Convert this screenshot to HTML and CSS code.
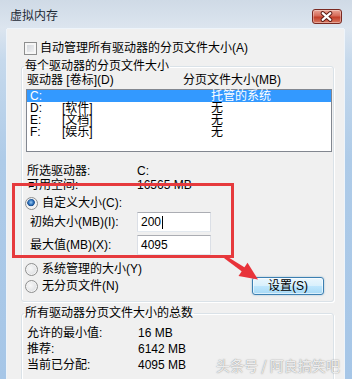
FILE: index.html
```html
<!DOCTYPE html>
<html lang="zh-CN">
<head>
    <meta charset="UTF-8">
    <title>虚拟内存</title>
    <link rel="stylesheet" href="styles.css">
</head>
<body>
    <div class="window">
        <div class="titlebar">
            <span class="title">虚拟内存</span>
            <span class="close">
                <svg width="30" height="15" viewBox="0 0 30 15">
                    <path d="M11 4 L19 11 M19 4 L11 11" stroke="#5a1a14" stroke-width="4.2" stroke-linecap="round"/>
                    <path d="M11 4 L19 11 M19 4 L11 11" stroke="#fff" stroke-width="2.2" stroke-linecap="round"/>
                </svg>
            </span>
        </div>

        <div class="client">
            <label class="check-row"><span class="checkbox"></span>自动管理所有驱动器的分页文件大小(A)</label>

            <fieldset class="group group-drives">
                <legend>每个驱动器的分页文件大小</legend>
                <div class="list-head">
                    <span class="col-drive">驱动器 [卷标](D)</span>
                    <span>分页文件大小(MB)</span>
                </div>
                <div class="listbox">
                    <div class="list-row selected"><span class="col-name"><span class="letter">C:</span></span><span>托管的系统</span></div>
                    <div class="list-row"><span class="col-name"><span class="letter">D:</span>[软件]</span><span>无</span></div>
                    <div class="list-row"><span class="col-name"><span class="letter">E:</span>[文档]</span><span>无</span></div>
                    <div class="list-row"><span class="col-name"><span class="letter">F:</span>[娱乐]</span><span>无</span></div>
                </div>

                <div class="info-row info-first"><span class="info-label">所选驱动器:</span><span>C:</span></div>
                <div class="info-row"><span class="info-label">可用空间:</span><span>16565 MB</span></div>

                <label class="radio-row custom-row"><span class="radio checked"></span>自定义大小(C):</label>
                <div class="size-row size-first">
                    <span class="size-label">初始大小(MB)(I):</span>
                    <span class="textbox">200<span class="caret"></span></span>
                </div>
                <div class="size-row">
                    <span class="size-label">最大值(MB)(X):</span>
                    <span class="textbox">4095</span>
                </div>

                <label class="radio-row system-row"><span class="radio"></span>系统管理的大小(Y)</label>
                <div class="last-row">
                    <label class="radio-row"><span class="radio"></span>无分页文件(N)</label>
                    <button class="set-btn">设置(S)</button>
                </div>
            </fieldset>

            <fieldset class="group group-total">
                <legend>所有驱动器分页文件大小的总数</legend>
                <div class="total-row total-first"><span class="total-label">允许的最小值:</span><span>16 MB</span></div>
                <div class="total-row"><span class="total-label">推荐:</span><span>6142 MB</span></div>
                <div class="total-row"><span class="total-label">当前已分配:</span><span>4095 MB</span></div>
            </fieldset>
        </div>

        <div class="highlight-box"></div>
        <svg class="arrow" width="50" height="40" viewBox="215 250 50 40">
            <polygon points="224.2,258.2 225.8,255.8 246.4,268.5 243.6,272.7" fill="#e8333a"/>
            <polygon points="258,279.5 238.5,275.9 247.5,262.7" fill="#e8333a"/>
        </svg>
        <div class="watermark">头条号 / 阿良搞笑吧</div>
    </div>
</body>
</html>
```

FILE: styles.css
```css
* {
    box-sizing: border-box;
}
body {
    margin: 0;
    width: 352px;
    height: 379px;
    overflow: hidden;
    font-family: "Liberation Sans", "Noto Sans CJK SC", sans-serif;
    font-size: 12px;
    line-height: 13px;
    color: #000;
}
.window {
    position: relative;
    height: 379px;
    background: linear-gradient(180deg, #cfdae6 0px, #dce5ef 28px, #c6d9ec 60px, #aecbe8 160px, #a6c6e7 379px);
}
.titlebar {
    height: 29px;
    display: flex;
    justify-content: space-between;
    align-items: flex-start;
    padding: 0 10px;
}
.title {
    margin-top: 10px;
    color: #1e2a36;
}
.close {
    margin-top: 9px;
    width: 30px;
    height: 15px;
    border: 1px solid #7a2a22;
    border-radius: 3px;
    background: linear-gradient(180deg, #eaa495 0%, #d66a58 45%, #c23e28 55%, #d97a64 100%);
    box-shadow: inset 0 0 0 1px rgba(255,255,255,0.35);
    display: flex;
}
.close svg {
    margin: -1px 0 0 -1px;
}

.client {
    margin-left: 7px;
    width: 337px;
    height: 350px;
    overflow: hidden;
    background: #f0f0f0;
    padding-top: 13px;
    box-shadow: -1px 0 0 #eef4fa, 1px 0 0 #eef4fa, 0 -1px 0 #eef4fa;
}

.check-row {
    display: flex;
    align-items: center;
    gap: 3px;
    height: 13px;
    margin-left: 17px;
}
.checkbox {
    width: 13px;
    height: 13px;
    border: 1px solid #8e8f8f;
    background: linear-gradient(135deg, #cdd1d7, #f7f7f7);
    box-shadow: inset 0 0 0 2px #f6f6f6;
}

.group {
    margin: 5px 0 0 14px;
    width: 313px;
    min-width: 0;
    padding: 0 1px 6px 2px;
    border: 1px solid #dae2e8;
    border-radius: 3px;
    box-shadow: inset 1px 1px 0 #fff, 1px 1px 0 #fff;
}
.group legend {
    padding: 0 1px;
    line-height: 13px;
}

.list-head {
    display: flex;
    margin-top: 1px;
    padding-left: 3px;
}
.col-drive {
    width: 156px;
}
.listbox {
    margin: 2px 0 0 2px;
    width: 306px;
    height: 63px;
    border: 1px solid #828790;
    background: #fff;
}
.list-row {
    display: flex;
    height: 12px;
    line-height: 12px;
    padding-left: 3px;
}
.list-row.selected {
    background: #3399ff;
    color: #fff;
}
.col-name {
    display: flex;
    width: 181px;
}
.letter {
    width: 32px;
}

.info-row {
    display: flex;
    padding-left: 3px;
    margin-top: 1px;
}
.info-row.info-first {
    margin-top: 13px;
}
.info-label {
    width: 110px;
}

.radio-row {
    display: flex;
    align-items: center;
    gap: 4px;
    height: 13px;
    padding-left: 1px;
}
.radio {
    width: 13px;
    height: 13px;
    border: 1px solid #8e8f8f;
    border-radius: 50%;
    background: radial-gradient(circle at 40% 40%, #f8f8f8, #d4d6da);
    box-shadow: inset 0 0 0 1px #f4f4f4;
}
.radio.checked {
    background: radial-gradient(circle at 45% 40%, #9ccbf3 0, #2d6fb8 2.5px, #1c4f8e 3.5px, #f4f4f4 4.2px, #e4e5e8 100%);
}
.custom-row {
    margin-top: 5px;
}
.system-row {
    margin-top: 8px;
}

.size-row {
    display: flex;
    align-items: center;
    height: 20px;
    margin-top: 3px;
    padding-left: 6px;
}
.size-row.size-first {
    margin-top: 2px;
}
.size-label {
    width: 107px;
}
.textbox {
    display: flex;
    align-items: center;
    width: 74px;
    height: 20px;
    padding-left: 3px;
    background: #fff;
    border: 1px solid #dbdfe6;
    border-top-color: #abadb3;
    border-bottom-color: #e3e9ef;
}
.caret {
    width: 1px;
    height: 13px;
    margin-left: 1px;
    background: #000;
}

.last-row {
    display: flex;
    justify-content: space-between;
    align-items: center;
    height: 18px;
    margin-top: 1px;
}
.set-btn {
    width: 72px;
    height: 18px;
    margin-right: 8px;
    padding: 0;
    font-family: inherit;
    font-size: 12px;
    line-height: 13px;
    color: #000;
    border: 1px solid #3c7fb1;
    border-radius: 3px;
    background: linear-gradient(180deg, #eaf6fd 0%, #d9f0fc 48%, #bee6fd 52%, #a7d9f5 100%);
    box-shadow: inset 0 0 0 1px rgba(255,255,255,0.6), 0 0 2px rgba(60,127,177,0.5);
}

.group-total {
    padding-bottom: 10px;
}
.total-row {
    display: flex;
    padding-left: 3px;
    margin-top: 3px;
}
.total-row.total-first {
    margin-top: 7px;
}
.total-label {
    width: 111px;
}

.highlight-box {
    position: absolute;
    left: 12px;
    top: 183px;
    width: 222px;
    height: 75px;
    border: 3px solid #e63a3d;
}
.arrow {
    position: absolute;
    left: 215px;
    top: 250px;
}
.watermark {
    position: absolute;
    left: 216px;
    top: 357px;
    font-family: "Noto Sans CJK SC", sans-serif;
    font-size: 14px;
    line-height: 16px;
    color: rgba(250,250,250,0.9);
    text-shadow: 0 0 1px rgba(110,110,110,0.8), 0 0 2px rgba(140,140,140,0.4);
    white-space: nowrap;
}
```
